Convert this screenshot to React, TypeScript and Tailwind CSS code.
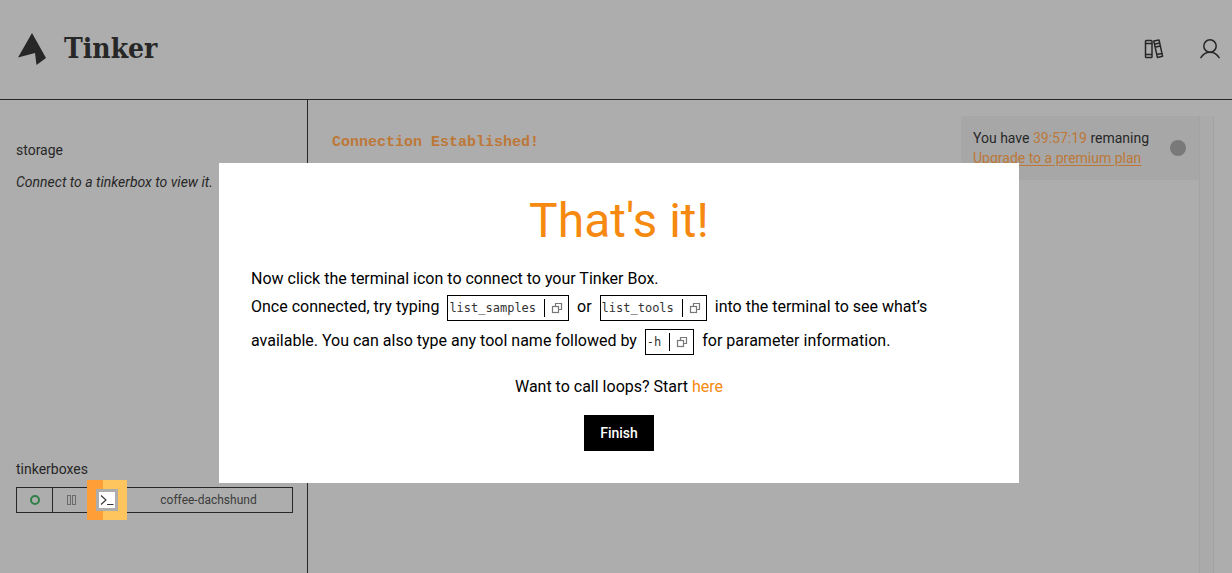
import type { ReactNode } from "react";

function Logo() {
  return (
    <svg className="w-7 h-8" viewBox="0 0 28 32" fill="currentColor" aria-hidden="true">
      <path d="M14 0 28 25 18.5 32 17 20 0 24.5Z" />
    </svg>
  );
}

function BooksIcon() {
  return (
    <svg className="w-5 h-5" viewBox="0 0 20 20" fill="none" stroke="currentColor" strokeWidth="1.5" strokeLinejoin="round" aria-hidden="true">
      <rect x="1.5" y="1.5" width="6.5" height="17" rx="0.8" />
      <path d="M1.5 4.5H8M1.5 15.5H8" />
      <path d="M9.8 2 15 1 18.6 17.2 13.4 18.4ZM10.4 5.2l5.2-1.1M11 8.2l5.2-1.1M12.7 15.6l5.2-1.1" />
    </svg>
  );
}

function UserIcon() {
  return (
    <svg className="w-5 h-5" viewBox="0 0 20 20" fill="none" stroke="currentColor" strokeWidth="1.5" strokeLinecap="round" aria-hidden="true">
      <circle cx="10" cy="7" r="6.2" />
      <path d="M0.9 18.7C3 15 6 13.2 10 13.2s7 1.8 9.1 5.5" />
    </svg>
  );
}

function CopyIcon() {
  return (
    <svg className="w-3 h-3" viewBox="0 0 12 12" fill="none" stroke="currentColor" strokeWidth="1.2" aria-hidden="true">
      <path d="M4.5 4.5V1.5h6v6h-3" />
      <rect x="1.5" y="4.5" width="6" height="6" />
    </svg>
  );
}

function Command({ children }: { children: ReactNode }) {
  return (
    <span className="inline-flex items-center h-[26px] my-1 mx-1 pl-px pr-[5px] border border-black align-middle">
      <code className="font-['DejaVu_Sans_Mono',monospace] text-xs text-[#333]">{children}</code>
      <span className="w-px h-[18px] ml-2 mr-[6px] bg-black" />
      <button type="button" aria-label="Copy command" className="text-[#777]">
        <CopyIcon />
      </button>
    </span>
  );
}

function Header() {
  return (
    <header className="flex items-center justify-between h-[100px] pl-[18px] pr-3 pb-[2px] border-b border-[#272727]">
      <a href="#" className="flex items-center gap-[18px]">
        <Logo />
        <span className="font-['DejaVu_Serif_Condensed','DejaVu_Serif',serif] font-bold text-[28px] leading-8">Tinker</span>
      </a>
      <nav className="flex items-center gap-9">
        <button type="button" aria-label="Library"><BooksIcon /></button>
        <button type="button" aria-label="Account"><UserIcon /></button>
      </nav>
    </header>
  );
}

function Sidebar() {
  return (
    <aside className="flex flex-col justify-between w-[308px] shrink-0 pl-4 pr-[14px] pt-10 pb-[60px] border-r border-[#272727]">
      <section className="whitespace-nowrap">
        <h2 className="text-sm leading-5">storage</h2>
        <p className="mt-3 text-sm leading-5 italic">Connect to a tinkerbox to view it.</p>
      </section>

      <section>
        <h2 className="text-sm leading-5">tinkerboxes</h2>
        <div className="flex items-stretch h-[26px] mt-2 border border-[#272727] text-xs text-[#3c3c3c]">
          <button type="button" aria-label="Status" className="flex items-center justify-center w-9 border-r border-[#272727]">
            <span className="w-[10px] h-[10px] rounded-full border-2 border-[#2e8048]" />
          </button>
          <button type="button" aria-label="Pause" className="flex items-center justify-center gap-px w-9">
            <span className="w-1 h-[10px] border border-[#6a6a6a]" />
            <span className="w-1 h-[10px] border border-[#6a6a6a]" />
          </button>
          <button type="button" aria-label="Open terminal" className="relative w-9">
            {/* highlighted step of the tour */}
            <span className="absolute -top-2 -left-[2px] z-20 flex items-center justify-center w-10 h-10 bg-linear-to-r from-[#ff9d36] from-40% to-[#fec55f] to-40%">
              <span className="flex items-center justify-center w-[22px] h-[22px] border-[3px] border-[#adadad] bg-white text-[#333]">
                <svg className="w-4 h-4 shrink-0" viewBox="0 0 16 16" fill="none" stroke="currentColor" strokeWidth="1.1" aria-hidden="true">
                  <path d="M2 3.5 7 8 2 12.5M8 12.5h6.5" />
                </svg>
              </span>
            </span>
          </button>
          <span className="flex flex-1 items-center justify-center">coffee-dachshund</span>
        </div>
      </section>
    </aside>
  );
}

function Terminal() {
  return (
    <main className="flex flex-1 items-stretch pl-6 pr-[18px] pt-4">
      <p className="flex-1 pt-[17px] font-['Liberation_Mono',monospace] font-bold text-[15px] leading-5 text-[#bd7838]">
        Connection Established!
      </p>
      <div className="flex items-center justify-between gap-4 min-w-[238px] h-16 pl-3 pr-[13px] rounded-l bg-[#a7a7a7] text-sm leading-5 whitespace-nowrap">
        <div>
          <p>You have <span className="text-[#bd7838]">39:57:19</span> remaning</p>
          <a href="#" className="text-[#bd7838] underline underline-offset-2">Upgrade to a premium plan</a>
        </div>
        <span className="w-4 h-4 rounded-full bg-[#797979]" />
      </div>
      <div className="w-[15px] border-x border-[#a3a3a3] bg-[#aaaaaa]" />
    </main>
  );
}

function FinishDialog() {
  return (
    <div className="fixed inset-0 z-10 flex items-start justify-center pt-[163px] pl-[6px]">
      <div role="dialog" aria-modal="true" aria-labelledby="finish-title" className="w-full max-w-[800px] p-8 bg-white text-base text-black">
        <h1 id="finish-title" className="mb-5 text-center text-5xl leading-[52px] text-[#f6890f]">That's it!</h1>
        <p>Now click the terminal icon to connect to your Tinker Box.</p>
        <p>
          Once connected, try typing <Command>list_samples</Command> or <Command>list_tools</Command> into the terminal to see what’s{" "}
          available. You can also type any tool name followed by <Command>-h</Command> for parameter information.
        </p>
        <p className="mt-4 text-center">
          Want to call loops? Start <a href="#" className="text-[#f6890f]">here</a>
        </p>
        <div className="flex justify-center mt-4">
          <button type="button" className="h-9 px-4 bg-black text-sm font-medium text-white">Finish</button>
        </div>
      </div>
    </div>
  );
}

export default function App() {
  return (
    <div className="flex flex-col min-h-screen bg-[#adadad] font-['Roboto',sans-serif] text-[#272727]">
      <Header />
      <div className="flex flex-1">
        <Sidebar />
        <Terminal />
      </div>
      <FinishDialog />
    </div>
  );
}
